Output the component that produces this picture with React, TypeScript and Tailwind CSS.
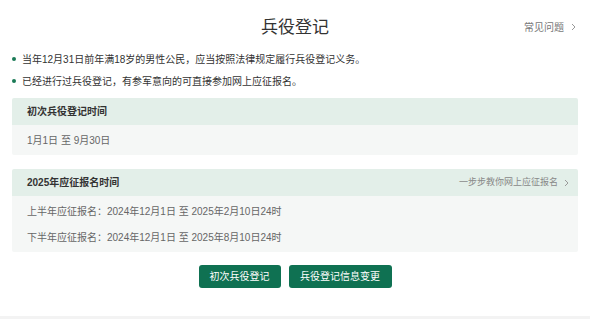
import React from "react";

const font = { fontFamily: '"Liberation Sans", "Noto Sans CJK SC", sans-serif' };

function Chevron({ className }: { className?: string }) {
  return (
    <svg className={className} width="5" height="8" viewBox="0 0 5 8" fill="none">
      <path d="M1 1l3 3-3 3" stroke="currentColor" strokeWidth="1" />
    </svg>
  );
}

export default function App() {
  return (
    <div className="w-[590px] h-[319px] bg-white flex flex-col overflow-hidden" style={font}>
      <div className="h-[48px] pt-[6px] grid grid-cols-[1fr_auto_1fr] items-center">
        <div />
        <div className="text-[17px] leading-none text-[#333]">兵役登记</div>
        <div className="flex justify-end items-center pr-[14px] gap-[7px] text-[10px] text-[#777]">
          <span>常见问题</span>
          <Chevron className="text-[#999]" />
        </div>
      </div>
      <div className="flex flex-col text-[10px] text-[#333]">
        <div className="h-[22px] flex items-center pl-[12px] gap-[6px]">
          <span className="w-[4px] h-[4px] rounded-full bg-[#1a7a56]" />
          <span>当年12月31日前年满18岁的男性公民，应当按照法律规定履行兵役登记义务。</span>
        </div>
        <div className="h-[22px] flex items-center pl-[12px] gap-[6px]">
          <span className="w-[4px] h-[4px] rounded-full bg-[#1a7a56]" />
          <span>已经进行过兵役登记，有参军意向的可直接参加网上应征报名。</span>
        </div>
      </div>
      <div className="mx-[12px] mt-[6px] w-[566px] rounded-[2px] overflow-hidden">
        <div className="h-[27px] bg-[#e3efe9] flex items-center px-[15px] text-[10px] font-bold text-[#333]">初次兵役登记时间</div>
        <div className="h-[30px] bg-[#f5f7f6] flex items-center px-[15px] text-[10px] text-[#666]">1月1日 至 9月30日</div>
      </div>
      <div className="mx-[12px] mt-[14px] w-[566px] rounded-[2px] overflow-hidden">
        <div className="h-[27px] bg-[#e3efe9] flex items-center justify-between pl-[15px] pr-[9px]">
          <span className="text-[10px] font-bold text-[#333]">2025年应征报名时间</span>
          <span className="flex items-center gap-[6px] text-[9px] text-[#888]">
            <span>一步步教你网上应征报名</span>
            <Chevron className="text-[#999]" />
          </span>
        </div>
        <div className="h-[56px] bg-[#f5f7f6] flex flex-col pt-[2px] px-[15px] text-[10px] text-[#666]">
          <div className="h-[26px] flex items-center">上半年应征报名：2024年12月1日 至 2025年2月10日24时</div>
          <div className="h-[26px] flex items-center">下半年应征报名：2024年12月1日 至 2025年8月10日24时</div>
        </div>
      </div>
      <div className="mt-[13px] flex justify-center gap-[8px]">
        <button className="w-[82px] h-[23px] rounded-[3px] bg-[#0f7152] text-white text-[10px] flex items-center justify-center">初次兵役登记</button>
        <button className="w-[103px] h-[23px] rounded-[3px] bg-[#0f7152] text-white text-[10px] flex items-center justify-center">兵役登记信息变更</button>
      </div>
      <div className="flex-1" />
      <div className="h-[3px] bg-[#f3f3f3]" />
    </div>
  );
}
